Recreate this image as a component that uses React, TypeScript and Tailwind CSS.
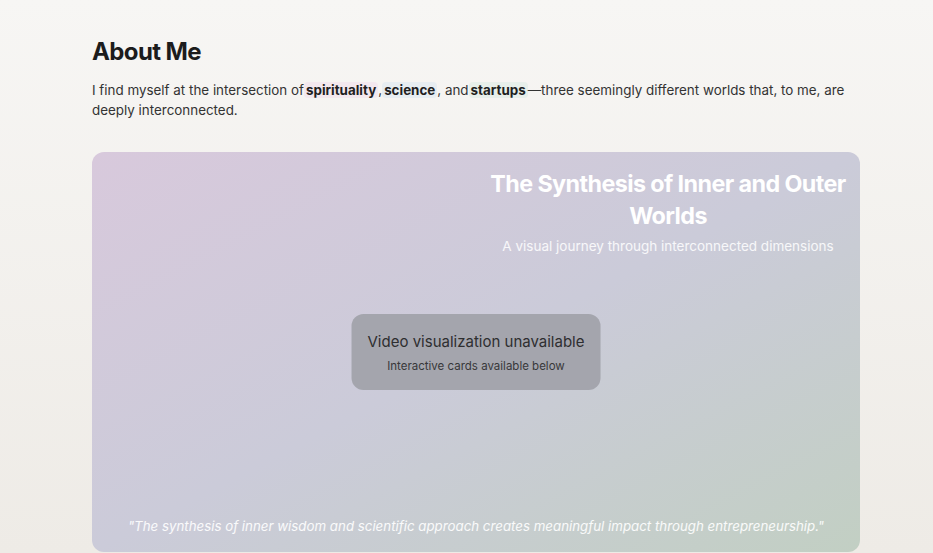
const Highlight = ({ children, tint }: { children: React.ReactNode; tint: string }) => (
  <span className={`font-bold text-[#1f1f1f] px-0.5 rounded-sm ${tint}`}>{children}</span>
);

const SynthesisCard = () => {
  return (
    <div className="relative h-[400px] w-full rounded-xl overflow-hidden bg-gradient-to-br from-[#d8c9dc] via-[#cbcbd9] to-[#c2cfc3]">
      <div className="flex h-full flex-col justify-between">
        <div className="flex justify-end">
          <div className="w-1/2 px-3 pt-4 text-center">
            <h3 className="text-[23.3px] leading-8 font-bold text-white tracking-tight">
              The Synthesis of Inner and Outer Worlds
            </h3>
            <p className="mt-1 text-[13.5px] leading-5 text-white/85">A visual journey through interconnected dimensions</p>
          </div>
        </div>
        <p className="px-4 pb-4 text-center text-[13.3px] leading-5 italic text-white/90">
          "The synthesis of inner wisdom and scientific approach creates meaningful impact through entrepreneurship."
        </p>
      </div>

      <div className="absolute left-1/2 top-1/2 -translate-x-1/2 -translate-y-1/2 rounded-xl bg-[#a4a5ad] px-4 py-4 text-center">
        <p className="text-[15px] leading-6 text-[#2e2e30] whitespace-nowrap">Video visualization unavailable</p>
        <p className="mt-1 text-[11.5px] leading-4 text-[#38383a]">Interactive cards available below</p>
      </div>
    </div>
  );
};

export default function App() {
  return (
    <div className="min-h-[553px] bg-gradient-to-b from-[#f7f6f4] to-[#eeebe6] font-['Inter',sans-serif] text-[#2a2a2a]">
      <section className="ml-[92px] w-[768px] pt-[36px]">
        <h2 className="text-2xl leading-8 font-bold tracking-tight text-[#1c1c1c]">About Me</h2>
        <p className="mt-3 text-[13.4px] leading-5 text-[#333]">
          I find myself at the intersection of
          <Highlight tint="bg-[#f3e8ee]">spirituality</Highlight>,
          <Highlight tint="bg-[#e7edf1]">science</Highlight>, and
          <Highlight tint="bg-[#e7efea]">startups</Highlight>
          —three seemingly different worlds that, to me, are deeply interconnected.
        </p>
        <div className="mt-8">
          <SynthesisCard />
        </div>
      </section>
    </div>
  );
}
